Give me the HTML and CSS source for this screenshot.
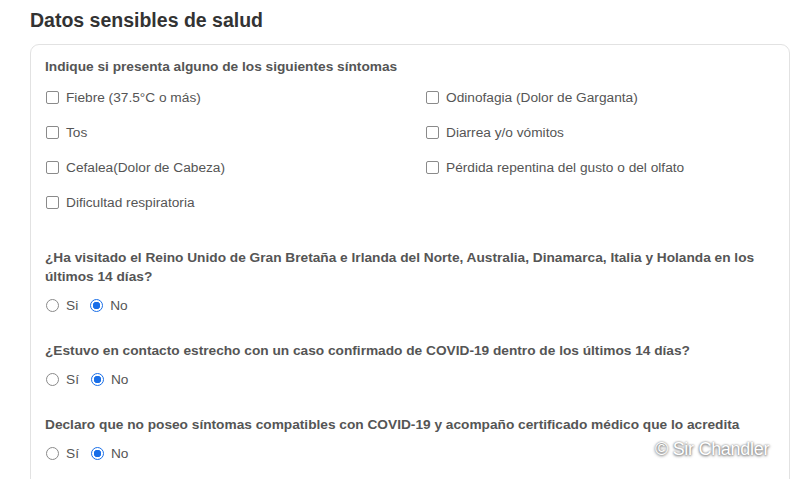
FILE: index.html
```html
<!DOCTYPE html>
<html lang="es">
<head>
<meta charset="utf-8">
<link rel="stylesheet" href="styles.css">
</head>
<body>
<div class="page">
  <h2 class="title">Datos sensibles de salud</h2>
  <div class="card">
    <div class="label">Indique si presenta alguno de los siguientes síntomas</div>
    <div class="symptoms">
      <label class="opt"><span class="cb"></span>Fiebre (37.5°C o más)</label>
      <label class="opt"><span class="cb"></span>Odinofagia (Dolor de Garganta)</label>
      <label class="opt"><span class="cb"></span>Tos</label>
      <label class="opt"><span class="cb"></span>Diarrea y/o vómitos</label>
      <label class="opt"><span class="cb"></span>Cefalea(Dolor de Cabeza)</label>
      <label class="opt"><span class="cb"></span>Pérdida repentina del gusto o del olfato</label>
      <label class="opt"><span class="cb"></span>Dificultad respiratoria</label>
    </div>
    <div class="question q1">¿Ha visitado el Reino Unido de Gran Bretaña e Irlanda del Norte, Australia, Dinamarca, Italia y Holanda en los últimos 14 días?</div>
    <div class="radios">
      <label class="opt"><span class="rd"></span>Si</label>
      <label class="opt"><span class="rd on"></span>No</label>
    </div>
    <div class="question">¿Estuvo en contacto estrecho con un caso confirmado de COVID-19 dentro de los últimos 14 días?</div>
    <div class="radios">
      <label class="opt"><span class="rd"></span>Sí</label>
      <label class="opt"><span class="rd on"></span>No</label>
    </div>
    <div class="question">Declaro que no poseo síntomas compatibles con COVID-19 y acompaño certificado médico que lo acredita</div>
    <div class="radios">
      <label class="opt"><span class="rd"></span>Sí</label>
      <label class="opt"><span class="rd on"></span>No</label>
    </div>
  </div>
  <div class="watermark">© Sir Chandler</div>
</div>
</body>
</html>
```
FILE: styles.css
```css
html, body {
  margin: 0;
  padding: 0;
  background: #fff;
  overflow: hidden;
}
body {
  font-family: "Liberation Sans", Arial, sans-serif;
  color: #555;
  font-size: 13.7px;
}
.page {
  position: relative;
  width: 800px;
  height: 479px;
  overflow: hidden;
  padding: 0 10px 0 30px;
  box-sizing: border-box;
}
.title {
  margin: 0;
  padding-top: 8px;
  height: 44px;
  box-sizing: border-box;
  font-size: 19.5px;
  line-height: 24px;
  font-weight: bold;
  color: #333;
}
.card {
  border: 1px solid #e2e2e2;
  border-radius: 9px;
  padding: 12px 14px 40px 14px;
  height: 600px;
}
.label, .question {
  font-weight: bold;
  color: #555;
  line-height: 19px;
}
.symptoms {
  display: grid;
  grid-template-columns: 380px 1fr;
  margin-top: 4px;
}
.opt {
  display: flex;
  align-items: center;
  height: 35px;
  color: #555;
}
.cb {
  width: 11px;
  height: 11px;
  border: 1px solid #8a8a8a;
  border-radius: 2px;
  margin: 0 7px 0 1px;
  background: #fff;
}
.question {
  margin-top: 18px;
}
.q1 {
  margin-top: 28px;
}
.radios {
  display: flex;
  gap: 11px;
  margin-top: 2px;
}
.rd {
  width: 11px;
  height: 11px;
  border: 1px solid #8a8a8a;
  border-radius: 50%;
  margin: 0 7px 0 1px;
  box-sizing: content-box;
}
.rd.on {
  border-color: #1a6fe8;
  background: radial-gradient(circle, #1a6fe8 0 3.5px, #fff 4px);
}
.watermark {
  position: absolute;
  left: 655px;
  top: 439px;
  font-size: 18px;
  color: #fff;
  text-shadow: 0 1px 3px #666, 0 0 2px #888;
  letter-spacing: -0.3px;
}
```
